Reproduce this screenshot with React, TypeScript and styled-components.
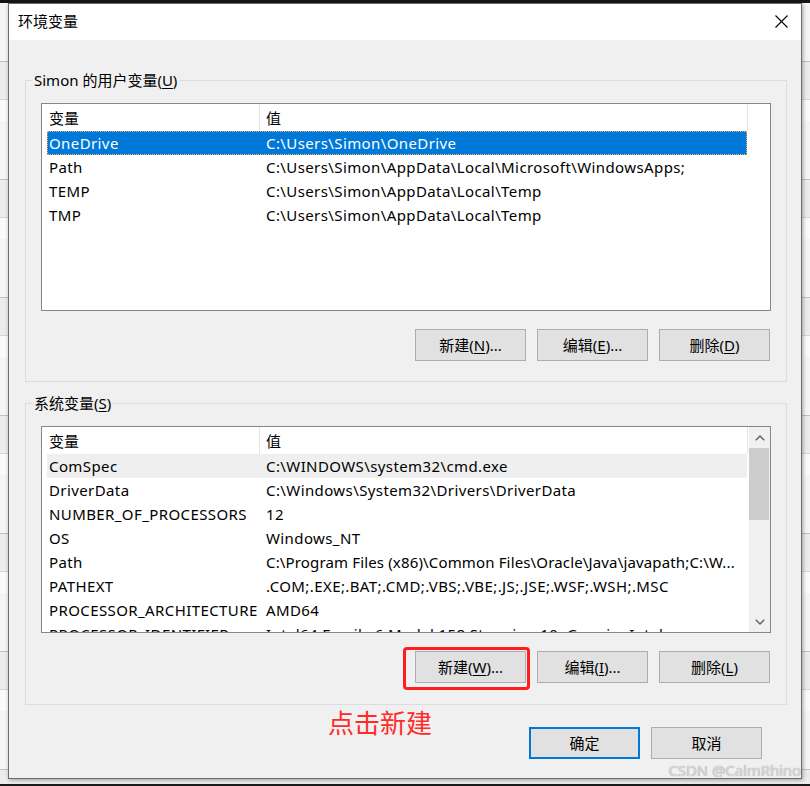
import React from "react";
import styled, { createGlobalStyle, css } from "styled-components";

const Global = createGlobalStyle`
  html, body { margin: 0; padding: 0; }
  body {
    background: #e8e8e8;
    font-family: "Noto Sans", "Noto Sans CJK SC", sans-serif;
  }
  #root { width: 810px; height: 786px; }
`;

const FONT = `"Noto Sans", "Noto Sans CJK SC", sans-serif`;

const Screen = styled.div`
  position: relative;
  width: 810px;
  height: 786px;
  box-sizing: border-box;
  border-top: 3px solid #141414;
  padding: 0 8px;
  overflow: hidden;
  background:
    linear-gradient(to bottom, transparent 0 781px, #1a1a1a 781px),
    repeating-linear-gradient(
      to bottom,
      #f5f5f5 0 58px,
      #b9c3cd 58px 59px,
      #ececec 59px 96px,
      #d6d6d6 96px 97px,
      #fafafa 97px 118px
    );
`;

const Dialog = styled.div`
  width: 794px;
  height: 776px;
  box-sizing: border-box;
  border: 1px solid #6c6c6c;
  background: #f0f0f0;
  display: flex;
  flex-direction: column;
  box-shadow: 1px 1px 4px rgba(0, 0, 0, 0.35);
  font-family: ${FONT};
  font-size: 15px;
  color: #000;
`;

const TitleBar = styled.div`
  height: 36px;
  flex: none;
  background: #fff;
  display: flex;
  align-items: center;
  justify-content: space-between;
  padding-left: 9px;
`;

const Title = styled.div`
  font-size: 15px;
  line-height: 20px;
  margin-top: -2px;
`;

const CloseBtn = styled.div`
  width: 40px;
  height: 36px;
  display: flex;
  align-items: center;
  justify-content: center;
  margin-top: -2px;
`;

const Body = styled.div`
  flex: 1;
  display: flex;
  flex-direction: column;
  padding: 30px 14px 0 16px;
  position: relative;
`;

const Group = styled.fieldset<{ $top?: number }>`
  margin: ${(p) => p.$top ?? 0}px 0 0 0;
  min-width: 0;
  border: 1px solid #dcdcdc;
  padding: 0;
`;

const GroupContent = styled.div<{ $bottom: number }>`
  padding: 13px 15px ${(p) => p.$bottom}px 15px;
`;

const Legend = styled.legend`
  font-size: 15px;
  line-height: 20px;
  padding: 0 2px;
  margin-left: 6px;
`;

const Key = styled.span`
  text-decoration: underline;
  text-underline-offset: 2px;
`;

const List = styled.div<{ $h: number }>`
  height: ${(p) => p.$h}px;
  box-sizing: border-box;
  border: 1px solid #828790;
  background: #fff;
  display: flex;
  overflow: hidden;
`;

const ListMain = styled.div`
  flex: 1;
  min-width: 0;
  overflow: hidden;
`;

const Header = styled.div`
  display: flex;
  height: 27px;
`;

const HeaderCell = styled.div<{ $w: number; $pad: number }>`
  width: ${(p) => p.$w}px;
  box-sizing: border-box;
  flex: none;
  border-right: 1px solid #e5e5e5;
  padding: 2px 0 0 ${(p) => p.$pad}px;
  line-height: 24px;
`;

const Rows = styled.div`
  padding-left: 5px;
`;

const Row = styled.div<{ $state?: "selected" | "hot" }>`
  width: 700px;
  height: 24px;
  box-sizing: border-box;
  display: grid;
  grid-template-columns: 212px 488px;
  align-items: center;
  line-height: 22px;
  white-space: nowrap;
  ${(p) =>
    p.$state === "selected" &&
    css`
      background: #0078d7;
      color: #fff;
      outline: 1px dotted #f3b36a;
      outline-offset: -1px;
    `}
  ${(p) =>
    p.$state === "hot" &&
    css`
      background: #efefef;
    `}
`;

const Cell = styled.div<{ $pad: number; $spacing?: number }>`
  overflow: hidden;
  padding-left: ${(p) => p.$pad}px;
  letter-spacing: ${(p) => p.$spacing ?? 0.4}px;
`;

const Scrollbar = styled.div`
  width: 21px;
  flex: none;
  background: #f0f0f0;
  display: flex;
  flex-direction: column;
`;

const ArrowBox = styled.div`
  height: 21px;
  flex: none;
  display: flex;
  align-items: center;
  justify-content: center;
`;

const Track = styled.div`
  flex: 1;
  padding: 0 1px 0 0;
`;

const Thumb = styled.div<{ $h: number }>`
  height: ${(p) => p.$h}px;
  background: #cdcdcd;
`;

const ButtonRow = styled.div`
  display: flex;
  justify-content: flex-end;
  gap: 11px;
  margin-top: 18px;
  padding-right: 1px;
`;

const Button = styled.button<{ $default?: boolean }>`
  width: 111px;
  height: 32px;
  box-sizing: border-box;
  background: #e1e1e1;
  border: 1px solid #adadad;
  font-family: ${FONT};
  font-size: 15px;
  color: #000;
  padding: 0;
  line-height: 20px;
  ${(p) =>
    p.$default &&
    css`
      border: 2px solid #0078d7;
    `}
`;

const Highlight = styled.div`
  position: relative;
  display: flex;
  &::after {
    content: "";
    position: absolute;
    left: -12px;
    right: -4px;
    top: -4px;
    bottom: -7px;
    border: 3px solid #ff1c1c;
    border-radius: 4px;
    pointer-events: none;
  }
`;

const Footer = styled.div`
  flex: 1;
  position: relative;
  display: flex;
  justify-content: flex-end;
  align-items: flex-start;
  gap: 11px;
  padding: 22px 25px 0 0;
`;

const Annotation = styled.div`
  position: absolute;
  left: 303px;
  top: 0;
  font-family: "Noto Sans CJK SC", sans-serif;
  font-size: 26px;
  line-height: 34px;
  color: #ff2a2a;
`;

const Watermark = styled.div`
  position: absolute;
  right: 9px;
  bottom: 7px;
  font-family: ${FONT};
  font-size: 15px;
  line-height: 18px;
  color: #dadada;
  text-shadow: 0 0 1px #8f8f8f;
  letter-spacing: -0.1px;
`;

const Chevron = ({ up }: { up?: boolean }) => (
  <svg width="10" height="6" viewBox="0 0 10 6">
    <path
      d={up ? "M0.8 5.3 L5 1.1 L9.2 5.3" : "M0.8 0.7 L5 4.9 L9.2 0.7"}
      fill="none"
      stroke="#606060"
      strokeWidth="1.4"
    />
  </svg>
);

type Item = { name: string; value: string; state?: "selected" | "hot"; tight?: boolean };

const userVars: Item[] = [
  { name: "OneDrive", value: "C:\\Users\\Simon\\OneDrive", state: "selected" },
  { name: "Path", value: "C:\\Users\\Simon\\AppData\\Local\\Microsoft\\WindowsApps;" },
  { name: "TEMP", value: "C:\\Users\\Simon\\AppData\\Local\\Temp" },
  { name: "TMP", value: "C:\\Users\\Simon\\AppData\\Local\\Temp" },
];

const sysVars: Item[] = [
  { name: "ComSpec", value: "C:\\WINDOWS\\system32\\cmd.exe", state: "hot" },
  { name: "DriverData", value: "C:\\Windows\\System32\\Drivers\\DriverData" },
  { name: "NUMBER_OF_PROCESSORS", value: "12" },
  { name: "OS", value: "Windows_NT" },
  {
    name: "Path",
    value: "C:\\Program Files (x86)\\Common Files\\Oracle\\Java\\javapath;C:\\W...",
    tight: true,
  },
  { name: "PATHEXT", value: ".COM;.EXE;.BAT;.CMD;.VBS;.VBE;.JS;.JSE;.WSF;.WSH;.MSC" },
  { name: "PROCESSOR_ARCHITECTURE", value: "AMD64" },
  { name: "PROCESSOR_IDENTIFIER", value: "Intel64 Family 6 Model 158 Stepping 10, GenuineIntel" },
];

const VarTable = ({ items }: { items: Item[] }) => (
  <ListMain>
    <Header>
      <HeaderCell $w={218} $pad={7}>变量</HeaderCell>
      <HeaderCell $w={488} $pad={6}>值</HeaderCell>
    </Header>
    <Rows>
      {items.map((it, i) => (
        <Row key={i} $state={it.state}>
          <Cell $pad={2}>{it.name}</Cell>
          <Cell $pad={7} $spacing={it.tight ? 0.15 : 0.4}>
            {it.value}
          </Cell>
        </Row>
      ))}
    </Rows>
  </ListMain>
);

export default function App() {
  return (
    <>
      <Global />
      <Screen>
        <Dialog>
          <TitleBar>
            <Title>环境变量</Title>
            <CloseBtn>
              <svg width="13" height="13" viewBox="0 0 13 13">
                <path d="M0.5 0.5 L12.5 12.5 M12.5 0.5 L0.5 12.5" stroke="#000" strokeWidth="1.1" />
              </svg>
            </CloseBtn>
          </TitleBar>
          <Body>
            <Group>
              <Legend>
                Simon 的用户变量(<Key>U</Key>)
              </Legend>
              <GroupContent $bottom={20}>
                <List $h={208}>
                  <VarTable items={userVars} />
                </List>
                <ButtonRow>
                  <Button>
                    新建(<Key>N</Key>)...
                  </Button>
                  <Button>
                    编辑(<Key>E</Key>)...
                  </Button>
                  <Button>
                    删除(<Key>D</Key>)
                  </Button>
                </ButtonRow>
              </GroupContent>
            </Group>
            <Group $top={11}>
              <Legend>
                系统变量(<Key>S</Key>)
              </Legend>
              <GroupContent $bottom={21}>
                <List $h={207}>
                  <VarTable items={sysVars} />
                  <Scrollbar>
                    <ArrowBox>
                      <Chevron up />
                    </ArrowBox>
                    <Track>
                      <Thumb $h={72} />
                    </Track>
                    <ArrowBox>
                      <Chevron />
                    </ArrowBox>
                  </Scrollbar>
                </List>
                <ButtonRow>
                  <Highlight>
                    <Button>
                      新建(<Key>W</Key>)...
                    </Button>
                  </Highlight>
                  <Button>
                    编辑(<Key>I</Key>)...
                  </Button>
                  <Button>
                    删除(<Key>L</Key>)
                  </Button>
                </ButtonRow>
              </GroupContent>
            </Group>
            <Footer>
              <Annotation>点击新建</Annotation>
              <Button $default>确定</Button>
              <Button>取消</Button>
            </Footer>
          </Body>
        </Dialog>
        <Watermark>CSDN @CalmRhino</Watermark>
      </Screen>
    </>
  );
}
